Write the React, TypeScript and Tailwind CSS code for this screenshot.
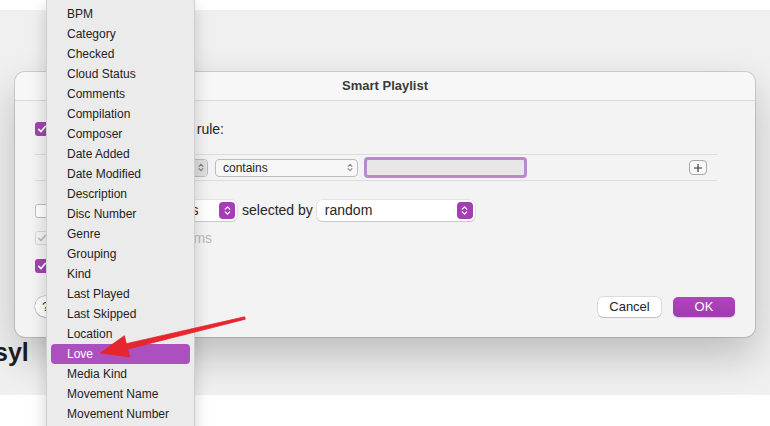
import React from "react";

const FIELDS = [
  "BPM",
  "Category",
  "Checked",
  "Cloud Status",
  "Comments",
  "Compilation",
  "Composer",
  "Date Added",
  "Date Modified",
  "Description",
  "Disc Number",
  "Genre",
  "Grouping",
  "Kind",
  "Last Played",
  "Last Skipped",
  "Location",
  "Love",
  "Media Kind",
  "Movement Name",
  "Movement Number",
];

const Chevrons = ({ className }: { className?: string }) => (
  <svg
    viewBox="0 0 10 14"
    className={className}
    fill="none"
    stroke="currentColor"
    strokeWidth={1.4}
    strokeLinecap="round"
    strokeLinejoin="round"
  >
    <path d="M2.5 5.5 5 3l2.5 2.5M2.5 8.5 5 11l2.5-2.5" />
  </svg>
);

type BoxState = "on" | "off" | "disabled";

const Checkbox = ({ state }: { state: BoxState }) => {
  if (state === "off")
    return <span className="h-[14px] w-[14px] shrink-0 rounded-[3px] border border-[#bdbdbd] bg-white" />;
  return (
    <span
      className={
        state === "on"
          ? "flex h-[14px] w-[14px] shrink-0 items-center justify-center rounded-[3px] bg-[#a540b4] text-white"
          : "flex h-[14px] w-[14px] shrink-0 items-center justify-center rounded-[3px] border border-[#d6d6d6] bg-[#f4f4f4] text-[#bcbcbc]"
      }
    >
      <svg viewBox="0 0 14 14" className="h-[12px] w-[12px]" fill="none" stroke="currentColor" strokeWidth={2} strokeLinecap="round" strokeLinejoin="round">
        <path d="M3.2 7.4 5.9 10l4.9-6" />
      </svg>
    </span>
  );
};

const PurplePopup = ({ label, className }: { label: string; className: string }) => (
  <div
    className={`flex h-[21px] items-center justify-between rounded-[5px] bg-white pl-[8px] pr-[2px] text-[14px] text-[#262626] shadow-[0_0_0_0.5px_rgba(0,0,0,0.12),0_1px_1px_rgba(0,0,0,0.12)] ${className}`}
  >
    <span>{label}</span>
    <span className="flex h-[17px] w-[16px] items-center justify-center rounded-[4px] bg-[#a33fb3] text-white">
      <Chevrons className="h-[13px] w-[9px]" />
    </span>
  </div>
);

export default function App() {
  return (
    <div className="relative h-[426px] w-[770px] overflow-hidden bg-white font-['Liberation_Sans',Arial,sans-serif]">
      {/* page behind the sheet */}
      <div className="h-[10px] bg-white" />
      <div className="flex h-[385px] flex-col justify-end bg-[#f0f0f0] pb-[30px]">
        <h1 className="-ml-[6px] text-[25px] font-bold leading-none text-[#1d1d1f]">syl</h1>
      </div>

      {/* Smart Playlist sheet */}
      <div className="absolute left-[15px] top-[72px] flex h-[265px] w-[740px] flex-col overflow-hidden rounded-[10px] bg-[#f3f3f3] shadow-[0_0_0_1px_rgba(0,0,0,0.13),0_18px_40px_rgba(0,0,0,0.22)]">
        <div className="flex h-[29px] shrink-0 items-center justify-center border-b border-[#dadada] bg-[#f7f7f7] text-[13px] font-bold text-[#3b3b3b]">
          Smart Playlist
        </div>

        <div className="flex flex-1 flex-col pb-[20px] pl-[20px] pr-[20px] text-[14px] text-[#262626]">
          <div className="mt-[20px] flex h-[16px] items-center">
            <Checkbox state="on" />
            <span className="ml-[24px]">Match the following rule:</span>
          </div>

          <div className="mr-[18px] mt-[17px] flex h-[27px] items-center border-y border-[#dcdcdc] pl-[20px] pr-[10px]">
            <div className="flex h-[18px] w-[153px] items-center justify-between rounded-[4px] border border-[#bdbdbd] bg-[#f7f7f7] pl-[7px] text-[12px]">
              <span>Artist</span>
              <span className="flex h-[16px] w-[12px] items-center justify-center rounded-r-[3px] bg-[#dedede] text-[#7a7a7a]">
                <Chevrons className="h-[11px] w-[8px]" />
              </span>
            </div>
            <div className="ml-[7px] flex h-[18px] w-[143px] items-center justify-between rounded-[4px] border border-[#bdbdbd] bg-[#f7f7f7] pl-[7px] pr-[3px] text-[12px]">
              <span>contains</span>
              <Chevrons className="h-[11px] w-[8px] text-[#8a8a8a]" />
            </div>
            <div className="ml-[6px] h-[21px] w-[163px] rounded-[4px] border-[3px] border-[#b98ac9] bg-[#e7e7e7]" />
            <div className="flex-1" />
            <button className="flex h-[15px] w-[18px] items-center justify-center rounded-[4px] border border-[#a8a8a8] bg-[#f9f9f9] text-[#333]">
              <svg viewBox="0 0 10 10" className="h-[10px] w-[10px]" stroke="currentColor" strokeWidth={1.1}>
                <path d="M5 1v8M1 5h8" />
              </svg>
            </button>
          </div>

          <div className="mt-[19px] flex h-[21px] items-center">
            <Checkbox state="off" />
            <span className="ml-[6px] w-[50px]">Limit to</span>
            <span className="ml-[6px] flex h-[21px] w-[40px] items-center bg-white px-[5px] shadow-[0_0_0_1px_rgba(0,0,0,0.12)]">25</span>
            <PurplePopup label="items" className="ml-[6px] w-[80px]" />
            <span className="ml-[5px]">selected by</span>
            <PurplePopup label="random" className="ml-[4px] w-[158px]" />
          </div>

          <div className="mt-[10px] flex h-[14px] items-center">
            <Checkbox state="disabled" />
            <span className="ml-[2px] text-[#b9b9b9]">Match only checked items</span>
          </div>

          <div className="mt-[14px] flex h-[14px] items-center">
            <Checkbox state="on" />
            <span className="ml-[6px]">Live updating</span>
          </div>

          <div className="mt-auto flex items-center">
            <button className="flex h-[21px] w-[21px] items-center justify-center rounded-full bg-white text-[13px] text-[#444] shadow-[0_0_0_0.5px_rgba(0,0,0,0.25),0_1px_1px_rgba(0,0,0,0.12)]">
              ?
            </button>
            <div className="flex-1" />
            <button className="h-[20px] w-[63px] rounded-[5px] bg-white text-[13px] text-[#262626] shadow-[0_0_0_0.5px_rgba(0,0,0,0.2),0_1px_1px_rgba(0,0,0,0.12)]">
              Cancel
            </button>
            <button className="ml-[12px] h-[20px] w-[62px] rounded-[5px] bg-gradient-to-b from-[#b044bd] to-[#a03aae] text-[13px] text-white shadow-[0_1px_1px_rgba(0,0,0,0.15)]">
              OK
            </button>
          </div>
        </div>
      </div>

      {/* field menu opened from the rule popup */}
      <div className="absolute left-[46px] top-0 h-[440px] w-[149px] border-x border-[#cfcfcf] bg-[#ebebeb] px-[4px] pt-[4px] text-[12px] text-[#222] shadow-[0_6px_16px_rgba(0,0,0,0.18)]">
        {FIELDS.map((field) => (
          <div
            key={field}
            className={
              field === "Love"
                ? "flex h-[20px] items-center rounded-[4px] bg-[#ad50bf] pl-[16px] text-white"
                : "flex h-[20px] items-center pl-[16px]"
            }
          >
            {field}
          </div>
        ))}
      </div>

      {/* annotation arrow */}
      <svg className="pointer-events-none absolute left-0 top-0 h-[426px] w-[770px]" viewBox="0 0 770 426">
        <polygon
          points="244.7,316.8 126.3,343.7 124.4,335.7 100,353 129.8,357.1 127.7,349.1 245.3,319.2"
          fill="#e5262d"
          stroke="#e5262d"
          strokeWidth={0.8}
          strokeLinejoin="round"
        />
      </svg>
    </div>
  );
}
